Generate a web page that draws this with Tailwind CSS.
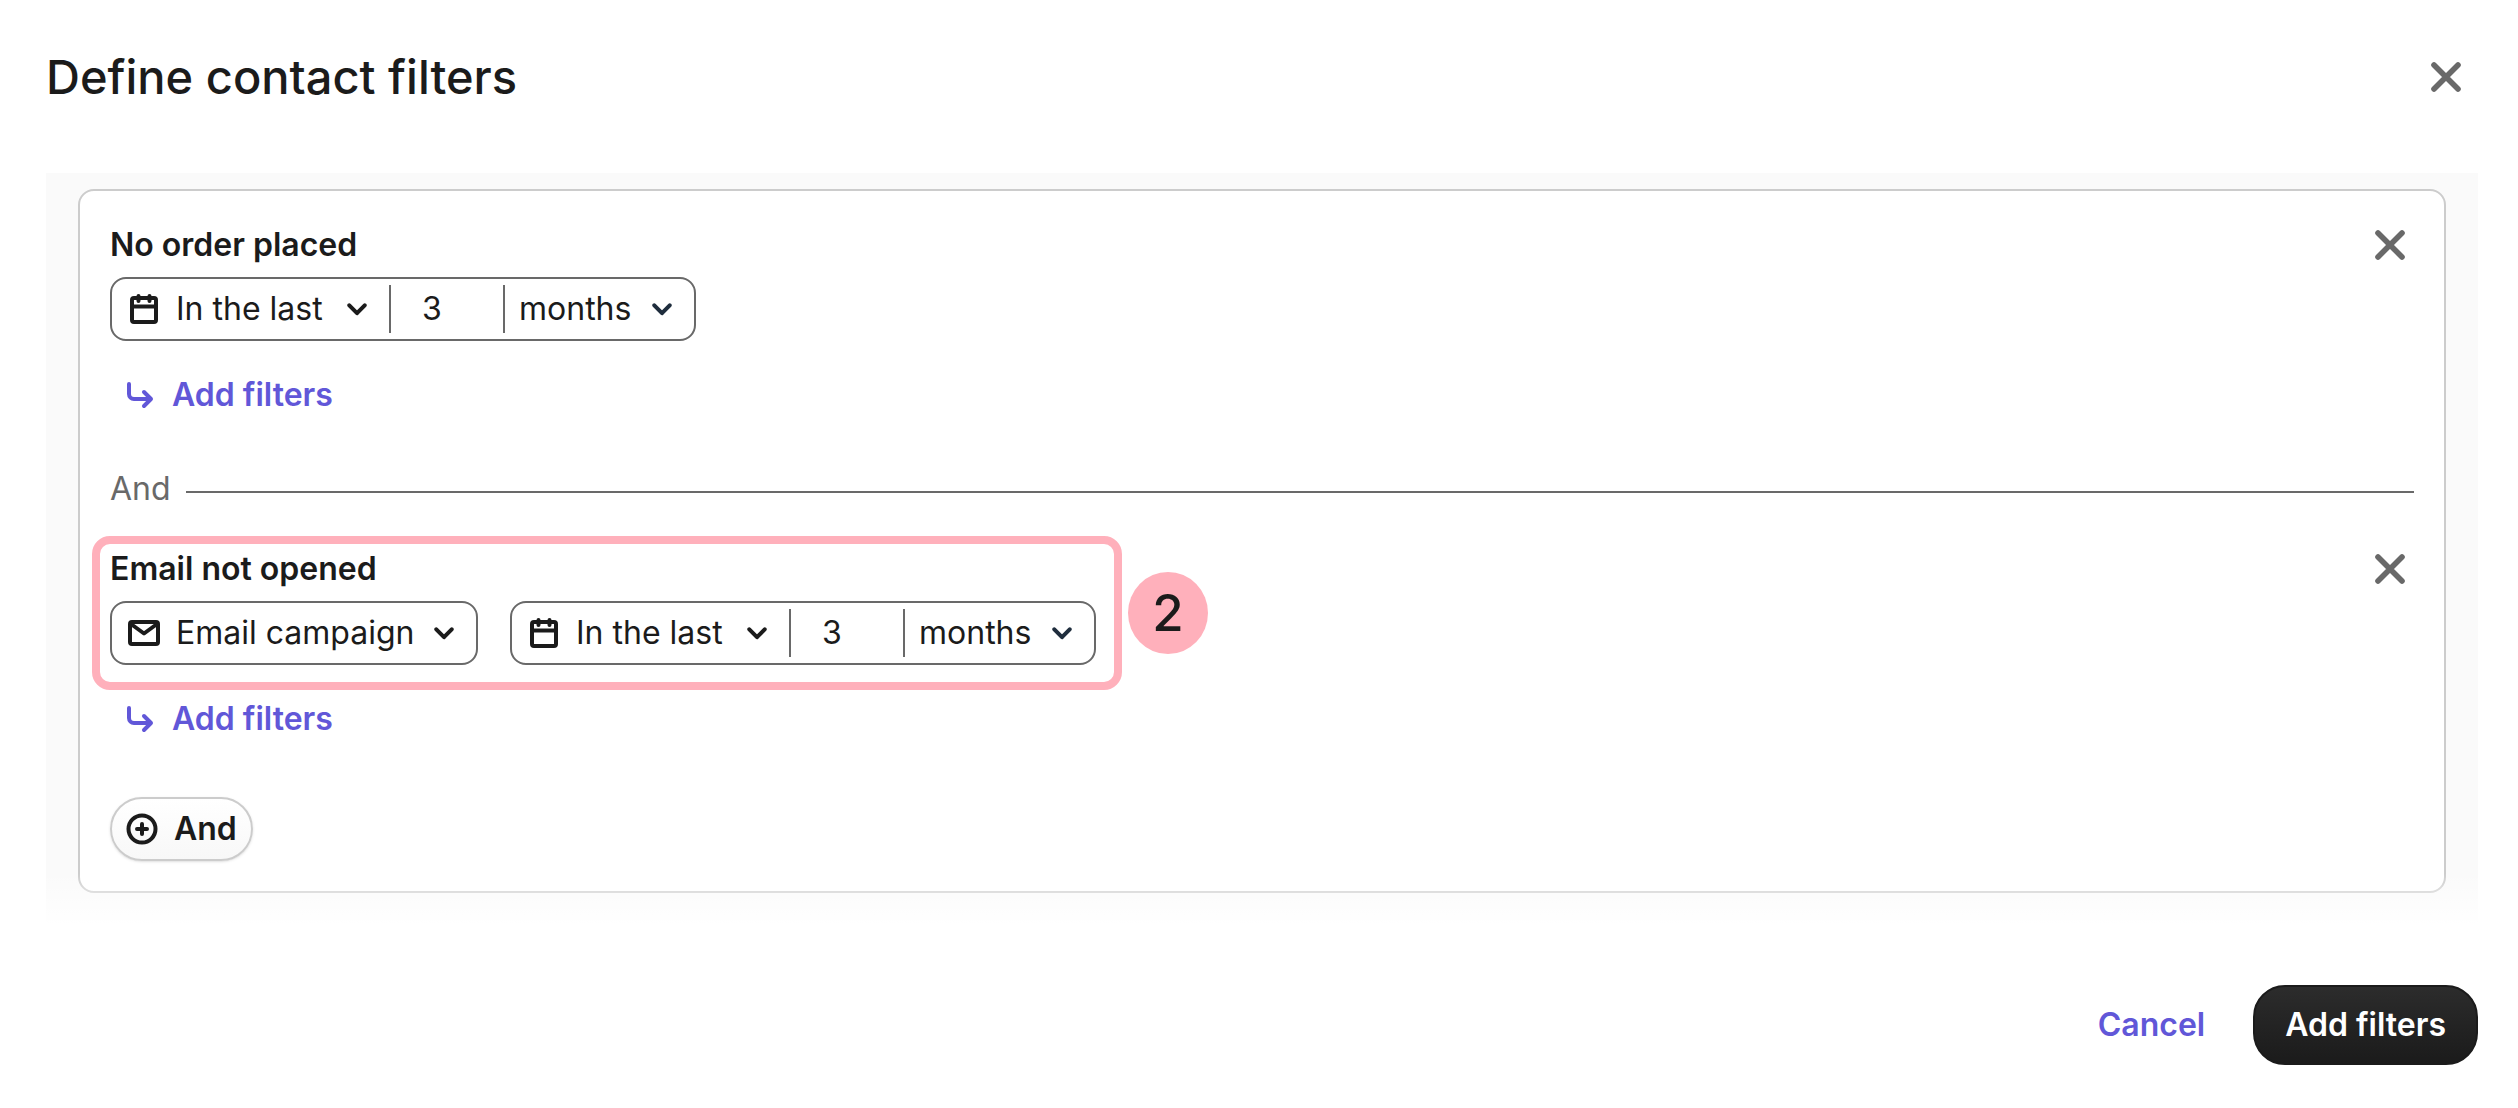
<!DOCTYPE html>
<html lang="en">
  <head>
    <meta charset="UTF-8" />
    <meta name="viewport" content="width=device-width, initial-scale=1.0" />
    <title>Define contact filters</title>
    <script src="https://cdn.jsdelivr.net/npm/@tailwindcss/browser@4"></script>
  </head>
  <body class="bg-white font-['Inter',sans-serif] text-[32px] leading-[48px] text-[#1b1b1b]">
    <!-- Icons -->
    <svg class="hidden">
      <symbol id="icon-close" viewBox="0 0 30 30">
        <path d="M3 3l24 24M27 3L3 27" fill="none" stroke="currentColor" stroke-width="5.6" stroke-linecap="round" />
      </symbol>
      <symbol id="icon-calendar" viewBox="0 0 32 32">
        <path d="M6 5h20a2 2 0 0 1 2 2v20a2 2 0 0 1-2 2H6a2 2 0 0 1-2-2V7a2 2 0 0 1 2-2zM10.500 3v5M21.500 3v5" fill="none" stroke="currentColor" stroke-width="4" stroke-linecap="round" stroke-linejoin="round" />
        <path d="M4 13.500h24" stroke="currentColor" stroke-width="4" />
      </symbol>
      <symbol id="icon-mail" viewBox="0 0 32 32">
        <path d="M4 5h24a2 2 0 0 1 2 2v18a2 2 0 0 1-2 2H4a2 2 0 0 1-2-2V7a2 2 0 0 1 2-2zM3 7l13 9.500L29 7" fill="none" stroke="currentColor" stroke-width="4" stroke-linejoin="round" />
      </symbol>
      <symbol id="icon-chevron" viewBox="0 0 20 13">
        <path d="M2.300 2.300L10 10.200l7.700-7.900" fill="none" stroke="currentColor" stroke-width="4" stroke-linecap="round" stroke-linejoin="round" />
      </symbol>
      <symbol id="icon-branch" viewBox="0 0 28 28">
        <path d="M3 3v10a5 5 0 0 0 5 5H25M18 11l7 7-7 7" fill="none" stroke="currentColor" stroke-width="4" stroke-linecap="round" stroke-linejoin="round" />
      </symbol>
      <symbol id="icon-plus" viewBox="0 0 32 32">
        <circle cx="16" cy="16" r="13.500" fill="none" stroke="currentColor" stroke-width="4" />
        <path d="M16 11v10M11 16h10" stroke="currentColor" stroke-width="4" stroke-linecap="round" />
      </symbol>
    </svg>

    <div class="min-h-screen flex flex-col pl-[46px] pr-10 bg-white">
      <!-- Header -->
      <header class="flex items-center justify-between pt-[45px] pr-[17px]">
        <h1 class="text-[47px] leading-[64px] font-medium">Define contact filters</h1>
        <button type="button" aria-label="Close">
          <svg class="size-[30px] text-[#696969]"><use href="#icon-close" /></svg>
        </button>
      </header>

      <!-- Filters -->
      <main class="relative mt-16 bg-[#fafafa] px-8 pt-4 pb-8">
        <div class="rounded-2xl border-2 border-[#ccc] bg-white p-[30px]">
          <section class="relative">
            <h2 class="font-semibold">No order placed</h2>
            <button type="button" aria-label="Remove filter" class="absolute top-[9px] right-[9px]">
              <svg class="size-[30px] text-[#696969]"><use href="#icon-close" /></svg>
            </button>
            <div class="mt-2 flex">
              <div class="flex h-16 items-center rounded-2xl border-2 border-[#696969]">
                <label class="flex items-center pl-4 pr-[22px]">
                  <svg class="size-8 mr-4"><use href="#icon-calendar" /></svg>
                  <select aria-label="Period" class="appearance-none outline-none"><option>In the last</option></select>
                  <svg class="ml-6 h-[13px] w-5"><use href="#icon-chevron" /></svg>
                </label>
                <input type="text" value="3" aria-label="Amount" class="h-12 w-[116px] border-x-2 border-[#696969] pl-[31px] outline-none" />
                <label class="flex items-center pl-[14px] pr-[22px]">
                  <select aria-label="Unit" class="appearance-none outline-none"><option>months</option></select>
                  <svg class="ml-5 h-[13px] w-5 text-[#1f2d3d]"><use href="#icon-chevron" /></svg>
                </label>
              </div>
            </div>
            <button type="button" class="mt-[22px] flex h-16 items-center gap-[18px] pl-4 font-semibold text-[#6157d8]">
              <svg class="size-7"><use href="#icon-branch" /></svg>
              Add filters
            </button>
          </section>

          <div class="mt-[38px] flex items-center gap-[15px] text-[#696969]">
            <span>And</span>
            <hr class="mt-[6px] grow border-t-2 border-[#696969]" />
          </div>

          <section class="relative mt-8">
            <h2 class="font-semibold">Email not opened</h2>
            <button type="button" aria-label="Remove filter" class="absolute top-[9px] right-[9px]">
              <svg class="size-[30px] text-[#696969]"><use href="#icon-close" /></svg>
            </button>
            <div class="mt-2 flex gap-8">
              <label class="flex h-16 items-center rounded-2xl border-2 border-[#696969] pl-4 pr-[22px]">
                <svg class="size-8 mr-4"><use href="#icon-mail" /></svg>
                <select aria-label="Channel" class="appearance-none outline-none"><option>Email campaign</option></select>
                <svg class="ml-[19px] h-[13px] w-5"><use href="#icon-chevron" /></svg>
              </label>
              <div class="flex h-16 items-center rounded-2xl border-2 border-[#696969]">
                <label class="flex items-center pl-4 pr-[22px]">
                  <svg class="size-8 mr-4"><use href="#icon-calendar" /></svg>
                  <select aria-label="Period" class="appearance-none outline-none"><option>In the last</option></select>
                  <svg class="ml-6 h-[13px] w-5"><use href="#icon-chevron" /></svg>
                </label>
                <input type="text" value="3" aria-label="Amount" class="h-12 w-[116px] border-x-2 border-[#696969] pl-[31px] outline-none" />
                <label class="flex items-center pl-[14px] pr-[22px]">
                  <select aria-label="Unit" class="appearance-none outline-none"><option>months</option></select>
                  <svg class="ml-5 h-[13px] w-5 text-[#1f2d3d]"><use href="#icon-chevron" /></svg>
                </label>
              </div>
            </div>
            <button type="button" class="mt-[22px] flex h-16 items-center gap-[18px] pl-4 font-semibold text-[#6157d8]">
              <svg class="size-7"><use href="#icon-branch" /></svg>
              Add filters
            </button>
            <!-- Step marker -->
            <div class="pointer-events-none absolute -top-[9px] -left-[18px] h-[154px] w-[1030px] rounded-[18px] border-8 border-[#ffb0bb]"></div>
            <div class="absolute top-[27px] left-[1018px] flex h-[82px] w-20 items-center justify-center rounded-[50%] bg-[#ffb0bb] text-[51px] font-medium">2</div>
          </section>

          <button type="button" class="mt-[46px] flex h-16 items-center gap-4 rounded-full border-2 border-[#ccc] bg-linear-to-b from-white to-[#f8f8f8] px-[14px] font-semibold shadow-sm">
            <svg class="size-8"><use href="#icon-plus" /></svg>
            And
          </button>
        </div>
        <div class="pointer-events-none absolute inset-x-0 bottom-0 h-[52px] bg-linear-to-b from-white/0 to-white"></div>
      </main>

      <!-- Footer -->
      <footer class="mt-[60px] flex items-center justify-end gap-12 font-semibold">
        <button type="button" class="text-[#6157d8]">Cancel</button>
        <button type="button" class="h-20 rounded-[32px] border-2 border-[#1b1b1b] bg-linear-to-b from-[#2c2c2c] to-[#1b1b1b] px-[30px] text-white">Add filters</button>
      </footer>
    </div>
  </body>
</html>
